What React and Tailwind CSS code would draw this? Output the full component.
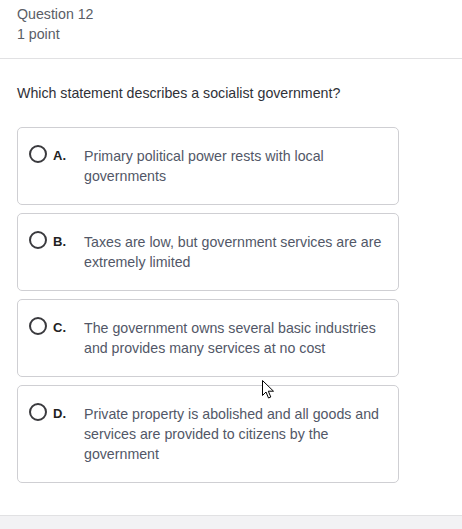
import React from "react";

const options = [
  { letter: "A.", text: "Primary political power rests with local governments" },
  { letter: "B.", text: "Taxes are low, but government services are are extremely limited" },
  { letter: "C.", text: "The government owns several basic industries and provides many services at no cost" },
  { letter: "D.", text: "Private property is abolished and all goods and services are provided to citizens by the government" },
];

const App = () => {
  return (
    <div className="relative w-[462px] h-[529px] bg-white overflow-hidden font-['Liberation_Sans',Arial,sans-serif]">
      {/* header */}
      <div className="px-[17px] pt-1 pb-[14px] border-b border-[#e1e1e3] text-[14.2px] leading-[20px] text-[#5a5d66]">
        <div>Question 12</div>
        <div>1 point</div>
      </div>

      <div className="px-[17px]">
        <p className="mt-6 text-[14.2px] leading-[20px] text-[#2f3138]">
          Which statement describes a socialist government?
        </p>

        <div className="mt-6 flex flex-col gap-[8px] w-[382px]">
          {options.map((o) => (
            <div
              key={o.letter}
              className="flex items-start border border-[#cfcfd3] rounded-[5px] pt-[18px] pb-[18px] pl-[11px] pr-[12px]"
            >
              <div className="w-[18px] h-[18px] -mt-[1px] rounded-full border-2 border-[#3a3a3e] shrink-0" />
              <div className="w-[37px] pl-[6px] shrink-0 text-[13px] leading-[20px] font-bold text-[#222]">
                {o.letter}
              </div>
              <div className="flex-1 text-[14.2px] leading-[20px] text-[#525767]">{o.text}</div>
            </div>
          ))}
        </div>
      </div>

      {/* bottom band */}
      <div className="absolute left-0 right-0 top-[515px] bottom-0 bg-[#f2f2f4] border-t border-[#e1e1e3]" />

      {/* mouse cursor */}
      <svg className="absolute left-[262px] top-[380px]" width="13" height="20" viewBox="0 0 13 20">
        <path
          d="M0.5 0.5 L0.5 15.5 L4 12 L6.5 18 L8.8 17 L6.3 11.2 L11.5 11.2 Z"
          fill="#fff"
          stroke="#000"
          strokeWidth="1"
          strokeLinejoin="miter"
        />
      </svg>
    </div>
  );
};

export default App;
